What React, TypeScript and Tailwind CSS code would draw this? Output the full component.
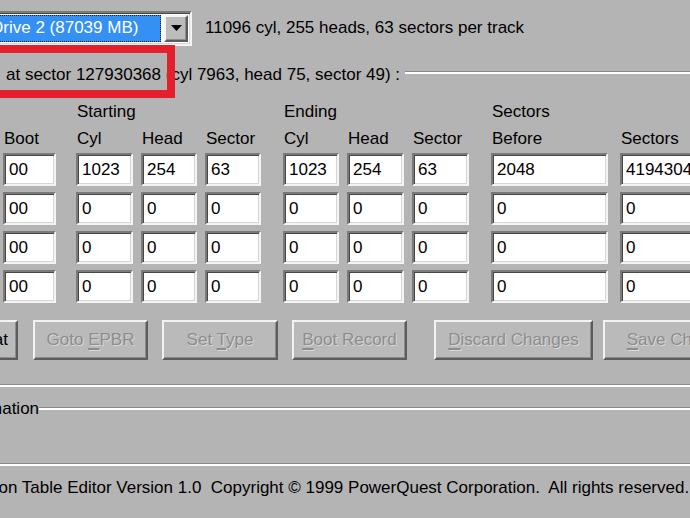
import React from 'react';

const cols = [
  { top: '', label: 'Boot', cls: 'ml-[3px] w-[53px]', vals: ['00', '00', '00', '00'] },
  { top: 'Starting', label: 'Cyl', cls: 'ml-[20px] w-[57px]', vals: ['1023', '0', '0', '0'] },
  { top: '', label: 'Head', cls: 'ml-[8px] w-[56px]', vals: ['254', '0', '0', '0'] },
  { top: '', label: 'Sector', cls: 'ml-[8px] w-[56px]', vals: ['63', '0', '0', '0'] },
  { top: 'Ending', label: 'Cyl', cls: 'ml-[22px] w-[56px]', vals: ['1023', '0', '0', '0'] },
  { top: '', label: 'Head', cls: 'ml-[8px] w-[57px]', vals: ['254', '0', '0', '0'] },
  { top: '', label: 'Sector', cls: 'ml-[8px] w-[57px]', vals: ['63', '0', '0', '0'] },
  { top: 'Sectors', label: 'Before', cls: 'ml-[22px] w-[117px]', vals: ['2048', '0', '0', '0'] },
  { top: '', label: 'Sectors', cls: 'ml-[12px] w-[110px]', vals: ['4194304', '0', '0', '0'] },
];

const buttons = [
  { pre: 'Form', key: '', post: 'at', cls: 'ml-[-56px] w-[74px]', enabled: true },
  { pre: 'Goto ', key: 'E', post: 'PBR', cls: 'ml-[15px] w-[115px]', enabled: false },
  { pre: 'Set ', key: 'T', post: 'ype', cls: 'ml-[14px] w-[116px]', enabled: false },
  { pre: '', key: 'B', post: 'oot Record', cls: 'ml-[14px] w-[115px]', enabled: false },
  { pre: '', key: 'D', post: 'iscard Changes', cls: 'ml-[27px] w-[159px]', enabled: false },
  { pre: '', key: 'S', post: 'ave Changes', cls: 'ml-[10px] w-[159px]', enabled: false },
];

const raised =
  'border-2 border-t-[#f3f3f3] border-l-[#f3f3f3] border-b-[#5c5c5c] border-r-[#5c5c5c] shadow-[inset_-1px_-1px_0_#8c8c8c]';
const sunken =
  'border-2 border-t-[#7a7a7a] border-l-[#7a7a7a] border-b-[#f4f4f4] border-r-[#f4f4f4] shadow-[inset_1px_1px_0_#474747,inset_-1px_-1px_0_#d6d6d6]';
const groove = 'border-t border-t-[#8a8a8a] border-b-2 border-b-white';

function Field({ value }: { value: string }) {
  return (
    <div className={`h-[33px] bg-white flex items-center pl-[4px] overflow-hidden whitespace-nowrap ${sunken}`}>
      {value}
    </div>
  );
}

export default function App() {
  return (
    <div className="relative w-[690px] h-[518px] overflow-hidden bg-[#b4b4b4] text-black text-[17px] leading-[20px] font-[family-name:Liberation_Sans,Arial,sans-serif]">
      {/* drive selector */}
      <div className="flex items-center h-[56px]">
        <div className={`ml-[-16px] w-[208px] h-[35px] shrink-0 bg-white p-[2px] flex gap-[3px] ${sunken}`}>
          <div className="flex-1 h-full bg-[#3590f3] border border-dotted border-[#1c1c1c] flex items-center pl-[2px] text-white whitespace-nowrap overflow-hidden">
            Drive 2 (87039 MB)
          </div>
          <div className={`w-[24px] h-full bg-[#bcbcbc] flex items-center justify-center ${raised}`}>
            <svg width="11" height="6" viewBox="0 0 11 6">
              <polygon points="0,0 11,0 5.5,6" fill="#000" />
            </svg>
          </div>
        </div>
        <span className="ml-[13px] whitespace-nowrap">11096 cyl, 255 heads, 63 sectors per track</span>
      </div>

      {/* partition table group label */}
      <div className="flex items-start h-[30px]">
        <span className="mt-[9px] pl-[6px] whitespace-nowrap">
          at sector 127930368 (cyl 7963, head 75, sector 49) :
        </span>
        <div className={`flex-1 ml-[5px] mt-[15px] ${groove}`} />
      </div>

      {/* table */}
      <div className="flex mt-[16px]">
        {cols.map((c, i) => (
          <div key={i} className={`flex flex-col shrink-0 ${c.cls}`}>
            <div className="h-[27px] pl-[1px] whitespace-nowrap">{c.top}</div>
            <div className="h-[24px] pl-[1px] whitespace-nowrap">{c.label}</div>
            <div className="flex flex-col gap-[6px]">
              {c.vals.map((v, j) => (
                <Field key={j} value={v} />
              ))}
            </div>
          </div>
        ))}
      </div>

      {/* buttons */}
      <div className="flex mt-[17px] h-[40px]">
        {buttons.map((b, i) => (
          <div
            key={i}
            className={`shrink-0 h-full bg-[#bababa] flex items-center justify-center ${raised} ${b.cls} ${
              b.enabled ? 'text-black' : 'text-[#8d8d8d] [text-shadow:1px_1px_0_#d8d8d8]'
            }`}
          >
            <span className="whitespace-pre">
              {b.pre}
              {b.key && <span className="underline decoration-[1.5px] underline-offset-[3px]">{b.key}</span>}
              {b.post}
            </span>
          </div>
        ))}
      </div>

      <div className={`mt-[24px] ${groove}`} />

      {/* information group */}
      <div className="flex items-start h-[76px]">
        <span className="ml-[-46px] mt-[12px] whitespace-nowrap">Information</span>
        <div className={`flex-1 mt-[20px] ${groove}`} />
      </div>
      <div className={groove} />

      <div className="mt-[12px] ml-[-45px] whitespace-pre">
        Partition Table Editor Version 1.0  Copyright © 1999 PowerQuest Corporation.  All rights reserved.
      </div>

      {/* red highlight annotation */}
      <div className="absolute left-[-20px] top-[45px] w-[195px] h-[53px] border-[8px] border-[#e3202b]" />
    </div>
  );
}
